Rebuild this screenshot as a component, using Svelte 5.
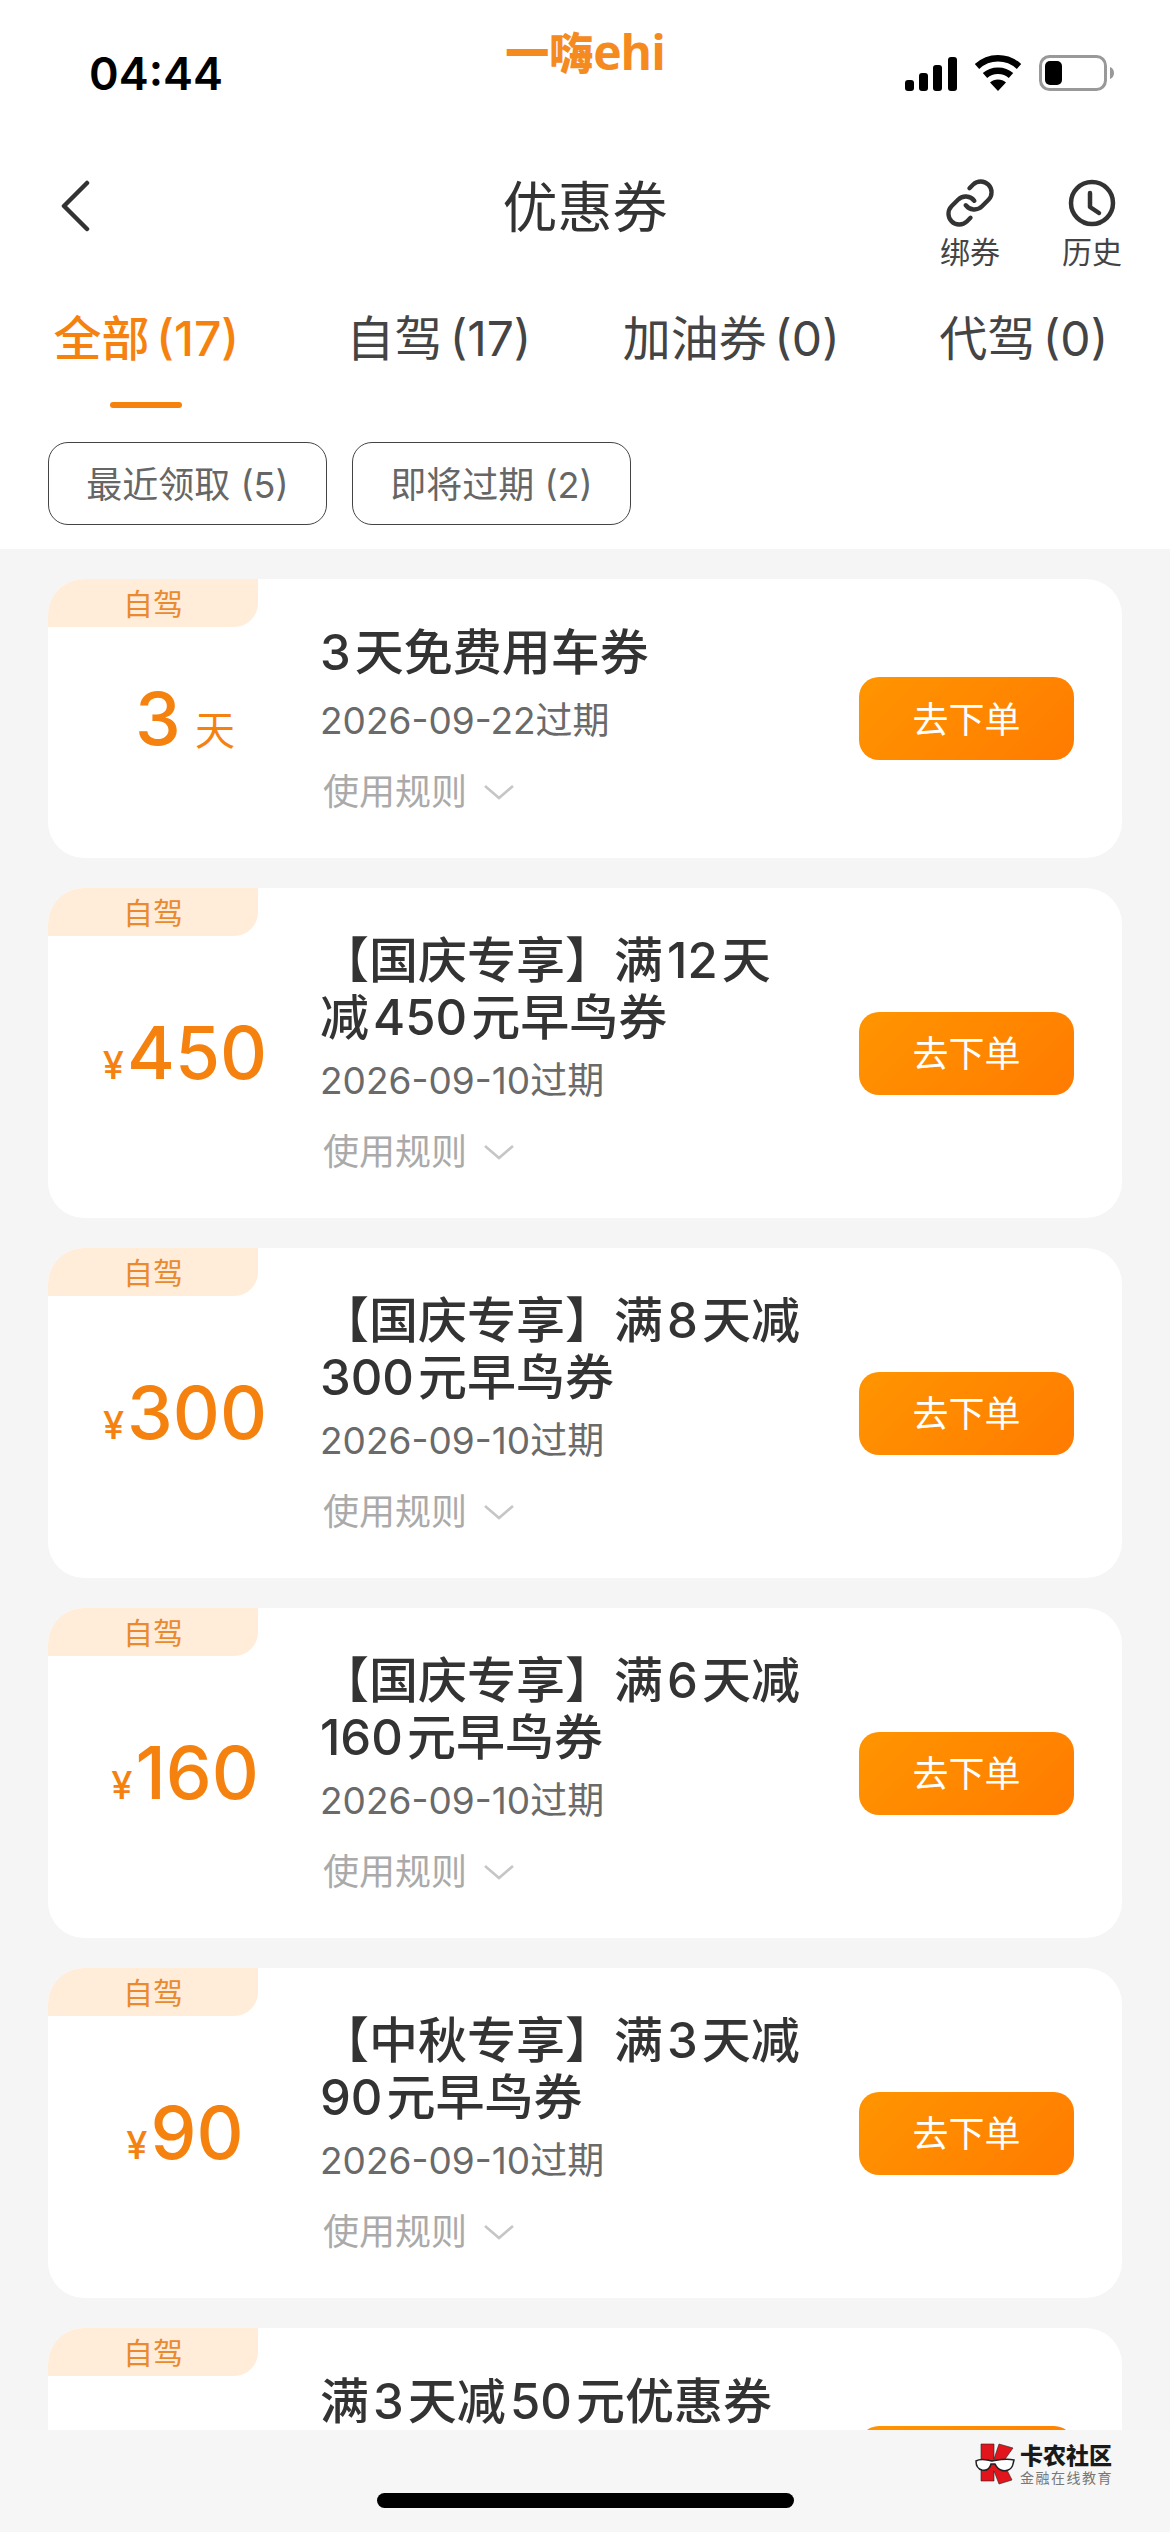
<script lang="ts">
	const tabs = [
		{ label: '全部 (17)', active: true },
		{ label: '自驾 (17)', active: false },
		{ label: '加油券 (0)', active: false },
		{ label: '代驾 (0)', active: false }
	];

	const chips = ['最近领取 (5)', '即将过期 (2)'];

	const coupons = [
		{ amount: '3', unit: '天', title: '3 天免费用车券', date: '2026-09-22过期', single: true },
		{ amount: '450', title: '【国庆专享】满 12 天减 450 元早鸟券', date: '2026-09-10过期' },
		{ amount: '300', title: '【国庆专享】满 8 天减 300 元早鸟券', date: '2026-09-10过期' },
		{ amount: '160', title: '【国庆专享】满 6 天减 160 元早鸟券', date: '2026-09-10过期' },
		{ amount: '90', title: '【中秋专享】满 3 天减 90 元早鸟券', date: '2026-09-10过期' },
		{ amount: '50', title: '满 3 天减 50 元优惠券', date: '2026-09-10过期', single: true }
	];
</script>

<div class="page">
	<header class="top">
		<!-- Status bar -->
		<div class="status">
			<span class="time">04:44</span>
			<span class="logo">一嗨<b>ehi</b></span>
			<div class="status-icons">
				<svg width="52" height="34" viewBox="0 0 52 34" fill="#000">
					<rect x="0" y="23" width="9" height="11" rx="3" />
					<rect x="14" y="16" width="9" height="18" rx="3" />
					<rect x="28" y="8" width="9" height="26" rx="3" />
					<rect x="43" y="0" width="9" height="34" rx="3" />
				</svg>
				<svg width="48" height="36" viewBox="0 0 48 36" fill="none" stroke="#000" stroke-width="6.5">
					<path d="M3 11.5C15 0.5 33 0.5 45 11.5" />
					<path d="M11 20.5C18 14 30 14 37 20.5" />
					<path d="M16 27.5C20 23.5 28 23.5 32 27.5L24 36Z" fill="#000" stroke="none" />
				</svg>
				<svg width="76" height="36" viewBox="0 0 76 36">
					<rect x="1.5" y="1.5" width="65" height="33" rx="9" fill="none" stroke="#999" stroke-width="3" />
					<rect x="6" y="6" width="17" height="24" rx="5" fill="#000" />
					<path d="M71 12C74 13 75 15.5 75 18C75 20.5 74 23 71 24Z" fill="#999" />
				</svg>
			</div>
		</div>

		<!-- Nav -->
		<div class="nav">
			<div class="back">
				<svg width="30" height="52" viewBox="0 0 30 52" fill="none" stroke="#333" stroke-width="4.5" stroke-linecap="round" stroke-linejoin="round">
					<path d="M27 3L4 26L27 49" />
				</svg>
			</div>
			<h1 class="nav-title">优惠券</h1>
			<div class="actions">
				<div class="action">
					<svg width="52" height="52" viewBox="0 0 24 24" fill="none" stroke="#333" stroke-width="2" stroke-linecap="round" stroke-linejoin="round">
						<path d="M10 13a5 5 0 0 0 7.54.54l3-3a5 5 0 0 0-7.07-7.07l-1.72 1.71" />
						<path d="M14 11a5 5 0 0 0-7.54-.54l-3 3a5 5 0 0 0 7.07 7.07l1.71-1.71" />
					</svg>
					<span>绑券</span>
				</div>
				<div class="action">
					<svg width="52" height="52" viewBox="0 0 52 52" fill="none" stroke="#333" stroke-width="4.5" stroke-linecap="round" stroke-linejoin="round">
						<circle cx="26" cy="26" r="21" />
						<path d="M24 16V30L33 36" />
					</svg>
					<span>历史</span>
				</div>
			</div>
		</div>

		<!-- Tabs -->
		<div class="tabs">
			{#each tabs as tab}
				<div class="tab" class:active={tab.active}>
					<span>{tab.label}</span>
					{#if tab.active}
						<i class="underline"></i>
					{/if}
				</div>
			{/each}
		</div>

		<div class="chips">
			{#each chips as chip}
				<span class="chip">{chip}</span>
			{/each}
		</div>
	</header>

	<!-- Coupons -->
	<main class="list">
		{#each coupons as coupon}
			<section class="card">
				<span class="tag">自驾</span>
				<div class="value">
					{#if coupon.unit}
						<span class="amount">{coupon.amount}</span>
						<span class="unit">{coupon.unit}</span>
					{:else}
						<span class="yen">¥</span>
						<span class="amount">{coupon.amount}</span>
					{/if}
				</div>
				<div class="info">
					<h2 class="title" class:single={coupon.single}>{coupon.title}</h2>
					<p class="date">{coupon.date}</p>
					<div class="rule">
						<span>使用规则</span>
						<svg width="32" height="16" viewBox="0 0 32 16" fill="none" stroke="#c6c6c6" stroke-width="2.6">
							<path d="M2 2L16 14L30 2" />
						</svg>
					</div>
				</div>
				<button type="button" class="order">去下单</button>
			</section>
		{/each}
	</main>

	<footer class="bottom">
		<i class="home"></i>
		<div class="mark">
			<svg width="42" height="42" viewBox="0 0 42 42">
				<path d="M6 1H19V16L24 1L38 5L28 19L37 37L24 41L19 28V38H6Z" fill="#e2141c" stroke="#222" stroke-width="0.6" />
				<path d="M1 18C6 15 11 17 17 18C23 17 31 15 39 17L38 21C37 27 30 29 26 27C22 26 21 23 20 21H16C15 25 12 28 7 27C3 26 1 22 1 18Z" fill="#fff" stroke="#222" stroke-width="1.5" />
			</svg>
			<div class="mark-text">
				<strong>卡农社区</strong>
				<small>金融在线教育</small>
			</div>
		</div>
	</footer>
</div>

<style>
	:global(body) {
		margin: 0;
		background: #fff;
	}

	.page {
		position: relative;
		width: 1170px;
		height: 2532px;
		display: flex;
		flex-direction: column;
		overflow: hidden;
		background: #fff;
		font-family: Inter, 'Noto Sans CJK SC', sans-serif;
		color: #333;
	}

	.top {
		flex: none;
	}

	.status {
		height: 170px;
		box-sizing: border-box;
		padding: 0 55px;
		display: grid;
		grid-template-columns: 1fr auto 1fr;
		align-items: start;
	}

	.time {
		margin: 48px 0 0 34px;
		font-size: 45px;
		line-height: 52px;
		font-weight: 600;
		color: #000;
	}

	.logo {
		margin-top: 27px;
		font-size: 44px;
		line-height: 50px;
		font-weight: 900;
		color: #f58a1f;
	}

	.logo b {
		font-family: 'Open Sans', sans-serif;
		font-weight: 700;
		font-size: 48px;
		letter-spacing: -1px;
	}

	.status-icons {
		margin-top: 55px;
		display: flex;
		align-items: flex-end;
		justify-content: flex-end;
		gap: 17px;
	}

	.nav {
		height: 110px;
		box-sizing: border-box;
		padding: 0 48px;
		display: grid;
		grid-template-columns: 1fr auto 1fr;
		align-items: start;
	}

	.back {
		padding: 10px 0 0 12px;
	}

	.nav-title {
		margin: 2px 0 0;
		font-size: 55px;
		line-height: 70px;
		font-weight: 400;
	}

	.actions {
		padding-top: 7px;
		display: flex;
		justify-content: flex-end;
		gap: 62px;
	}

	.action {
		width: 60px;
		display: flex;
		flex-direction: column;
		align-items: center;
	}

	.action span {
		font-size: 30px;
		line-height: 36px;
		margin-top: 5px;
		color: #444;
		white-space: nowrap;
	}

	.tabs {
		padding-top: 26px;
		display: grid;
		grid-template-columns: repeat(4, 1fr);
	}

	.tab {
		height: 102px;
		display: flex;
		flex-direction: column;
		align-items: center;
		font-size: 48px;
		line-height: 66px;
		word-spacing: -6px;
		color: #444;
		white-space: nowrap;
	}

	.tab.active {
		color: #f5820f;
		font-weight: 500;
	}

	.underline {
		margin-top: 30px;
		width: 72px;
		height: 6px;
		border-radius: 3px;
		background: #f5820f;
	}

	.chips {
		padding: 34px 48px 24px;
		display: flex;
		gap: 25px;
	}

	.chip {
		width: 279px;
		height: 83px;
		box-sizing: border-box;
		display: flex;
		align-items: center;
		justify-content: center;
		padding-bottom: 3px;
		border: 1.5px solid #444;
		border-radius: 20px;
		font-size: 36px;
		color: #666;
	}

	.list {
		flex: 1;
		min-height: 0;
		overflow: hidden;
		background: #f5f5f5;
		padding: 30px 48px 0;
		display: flex;
		flex-direction: column;
		gap: 30px;
	}

	.card {
		flex: none;
		position: relative;
		display: flex;
		align-items: center;
		background: #fff;
		border-radius: 36px;
		padding-right: 48px;
		overflow: hidden;
	}

	.tag {
		position: absolute;
		top: 0;
		left: 0;
		width: 210px;
		height: 48px;
		padding-bottom: 2px;
		box-sizing: border-box;
		display: flex;
		align-items: center;
		justify-content: center;
		background: #ffecd9;
		border-bottom-right-radius: 24px;
		font-size: 30px;
		color: #ea8a2e;
	}

	.value {
		flex: none;
		width: 274px;
		margin-right: -2px;
		display: flex;
		align-items: baseline;
		justify-content: center;
		color: #f5820f;
	}

	.amount {
		font-size: 73px;
		line-height: 86px;
		font-weight: 500;
	}

	.unit {
		margin-left: 14px;
		font-size: 40px;
	}

	.yen {
		font-size: 38px;
		font-weight: 500;
		margin-right: 3px;
	}

	.info {
		flex: 1;
		min-width: 0;
		padding: 44px 0 39px;
	}

	.title {
		margin: 0;
		max-width: 490px;
		font-size: 49px;
		line-height: 57px;
		font-weight: 500;
		word-spacing: -9px;
	}

	.title.single {
		min-height: 62px;
		padding-top: 1px;
		white-space: nowrap;
	}

	.date {
		margin: 8px 0 0;
		font-size: 37px;
		line-height: 54px;
		color: #6a6a6a;
	}

	.rule {
		margin-top: 17px;
		display: flex;
		align-items: center;
		gap: 16px;
		padding-left: 3px;
		font-size: 36px;
		line-height: 54px;
		color: #aaa;
	}

	.order {
		flex: none;
		width: 215px;
		height: 83px;
		padding: 0 0 4px;
		border: none;
		border-radius: 20px;
		background: linear-gradient(135deg, #ff9500, #ff7b00);
		color: #fff;
		font-family: inherit;
		font-size: 36px;
	}

	.bottom {
		flex: none;
		position: relative;
		height: 102px;
		background: #f6f6f6;
		display: flex;
		justify-content: center;
	}

	.home {
		margin-top: 63px;
		width: 417px;
		height: 15px;
		border-radius: 8px;
		background: #000;
	}

	.mark {
		position: absolute;
		top: 13px;
		left: 975px;
		display: flex;
		gap: 3px;
	}

	.mark-text {
		display: flex;
		flex-direction: column;
	}

	.mark-text strong {
		font-size: 23px;
		line-height: 26px;
		font-weight: 900;
		color: #1a1a1a;
	}

	.mark-text small {
		margin-top: 1px;
		font-size: 14px;
		line-height: 16px;
		letter-spacing: 1.5px;
		color: #777;
		white-space: nowrap;
	}
</style>
